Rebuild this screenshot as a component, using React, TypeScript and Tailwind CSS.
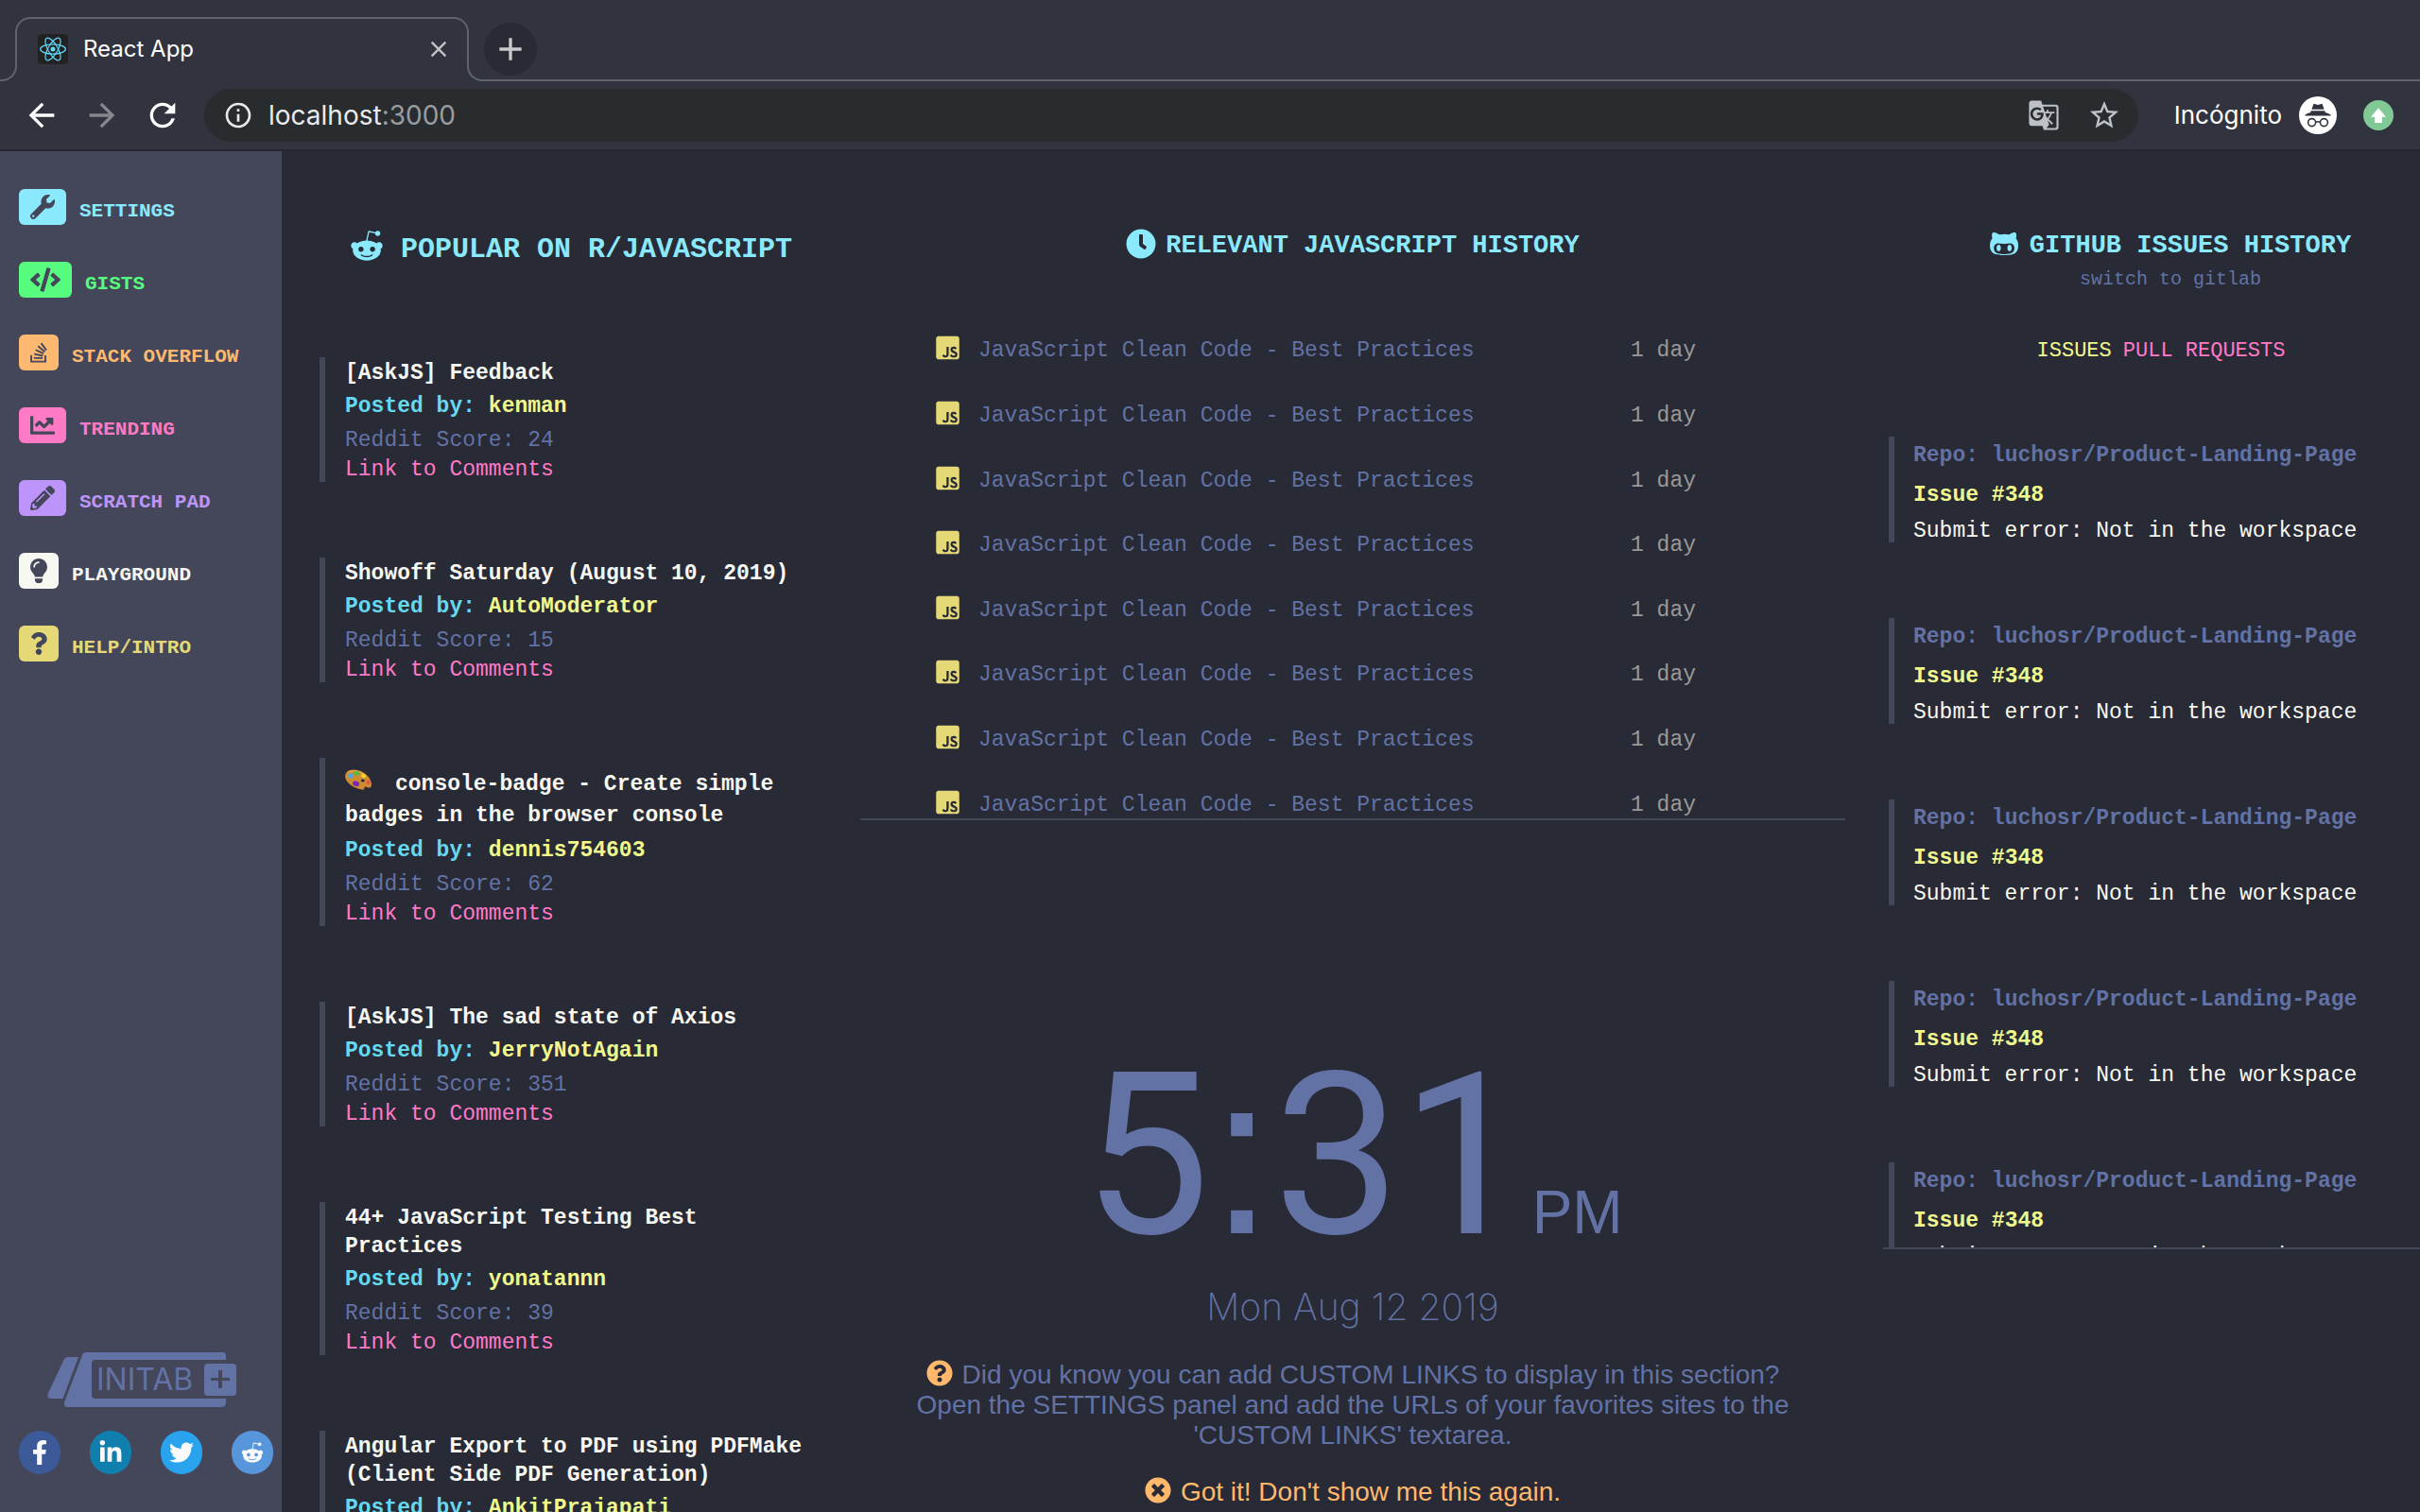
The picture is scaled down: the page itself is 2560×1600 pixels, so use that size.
import React from "react";
import type { IconType } from "react-icons";
import {
  FaChartLine,
  FaClock,
  FaCode,
  FaFacebookF,
  FaGithubAlt,
  FaJsSquare,
  FaLightbulb,
  FaLinkedinIn,
  FaPencilAlt,
  FaQuestion,
  FaQuestionCircle,
  FaRedditAlien,
  FaStackOverflow,
  FaTimesCircle,
  FaTwitter,
  FaWrench,
} from "react-icons/fa";
import {
  MdAdd,
  MdArrowBack,
  MdArrowForward,
  MdClose,
  MdGTranslate,
  MdInfoOutline,
  MdRefresh,
  MdStarBorder,
} from "react-icons/md";

type NavItem = { label: string; icon: IconType; iconWidth: string; bg: string; text: string };

const NAV: NavItem[] = [
  { label: "SETTINGS", icon: FaWrench, iconWidth: "w-[26px]", bg: "bg-[#8be9fd]", text: "text-[#8be9fd]" },
  { label: "GISTS", icon: FaCode, iconWidth: "w-[32px]", bg: "bg-[#57fb7d]", text: "text-[#57fb7d]" },
  { label: "STACK OVERFLOW", icon: FaStackOverflow, iconWidth: "w-[18px]", bg: "bg-[#ffb870]", text: "text-[#ffb870]" },
  { label: "TRENDING", icon: FaChartLine, iconWidth: "w-[26px]", bg: "bg-[#ff7ac4]", text: "text-[#ff7ac4]" },
  { label: "SCRATCH PAD", icon: FaPencilAlt, iconWidth: "w-[26px]", bg: "bg-[#bd94f9]", text: "text-[#bd94f9]" },
  { label: "PLAYGROUND", icon: FaLightbulb, iconWidth: "w-[18px]", bg: "bg-[#f8f8f2]", text: "text-[#f8f8f2]" },
  { label: "HELP/INTRO", icon: FaQuestion, iconWidth: "w-[18px]", bg: "bg-[#e5d977]", text: "text-[#e5d977]" },
];

const SOCIAL = [
  { label: "Facebook", icon: FaFacebookF, bg: "bg-[#3c5a98]", size: "size-[26px]" },
  { label: "LinkedIn", icon: FaLinkedinIn, bg: "bg-[#107fae]", size: "size-[26px]" },
  { label: "Twitter", icon: FaTwitter, bg: "bg-[#2aa3ef]", size: "size-[26px]" },
  { label: "Reddit", icon: FaRedditAlien, bg: "bg-[#5896dc]", size: "size-[24px]" },
];

type Post = { title: string; author: string; score: number; palette?: boolean };

const POSTS: Post[] = [
  { title: "[AskJS] Feedback", author: "kenman", score: 24 },
  { title: "Showoff Saturday (August 10, 2019)", author: "AutoModerator", score: 15 },
  {
    title: "console-badge - Create simple badges in the browser console",
    author: "dennis754603",
    score: 62,
    palette: true,
  },
  { title: "[AskJS] The sad state of Axios", author: "JerryNotAgain", score: 351 },
  { title: "44+ JavaScript Testing Best Practices", author: "yonatannn", score: 39 },
  { title: "Angular Export to PDF using PDFMake (Client Side PDF Generation)", author: "AnkitPrajapati", score: 27 },
];

const HISTORY = Array.from({ length: 8 }, () => ({
  title: "JavaScript Clean Code - Best Practices",
  age: "1 day",
}));

const ISSUES = Array.from({ length: 5 }, () => ({
  repo: "luchosr/Product-Landing-Page",
  number: 348,
  text: "Submit error: Not in the workspace",
}));

function ReactLogo() {
  return (
    <svg viewBox="0 0 32 32" className="size-8 shrink-0" aria-hidden="true">
      <rect width="32" height="32" rx="4" fill="#222" />
      <g fill="none" stroke="#61dafb" strokeWidth="1.2">
        <ellipse cx="16" cy="16" rx="13.4" ry="5.1" />
        <ellipse cx="16" cy="16" rx="13.4" ry="5.1" transform="rotate(60 16 16)" />
        <ellipse cx="16" cy="16" rx="13.4" ry="5.1" transform="rotate(120 16 16)" />
      </g>
      <circle cx="16" cy="16" r="2.5" fill="#61dafb" />
    </svg>
  );
}

function IncognitoBadge() {
  return (
    <svg viewBox="0 0 40 40" className="size-10 shrink-0" aria-hidden="true">
      <circle cx="20" cy="20" r="20" fill="#fff" />
      <path d="M15.2 8.4q.3-.8 1.2-.5l3.6 1 3.6-1q.9-.3 1.2.5l1.8 5.3H13.4z" fill="#31343f" />
      <path d="M12.8 15.2h14.4l.6 1.8q3.4.7 5.8 2.4v1H6.4v-1q2.4-1.7 5.8-2.4z" fill="#31343f" />
      <g fill="none" stroke="#31343f" strokeWidth="1.6">
        <circle cx="13.6" cy="27.6" r="4" />
        <circle cx="26.4" cy="27.6" r="4" />
        <path d="M17.6 27.3q2.4-1.2 4.8 0" />
      </g>
    </svg>
  );
}

function UpdateBadge() {
  return (
    <svg viewBox="0 0 32 32" className="size-8 shrink-0" aria-hidden="true">
      <circle cx="16" cy="16" r="16" fill="#81c995" />
      <path d="M16 8.3l8 9.4h-4.2V24h-7.6v-6.3H8z" fill="#fff" />
    </svg>
  );
}

function PaletteEmoji() {
  return (
    <svg viewBox="0 0 28 22" className="mr-[25px] inline-block h-[22px] w-7 align-baseline" role="img" aria-label="palette">
      <path
        d="M2 2.8C6-1 15 .2 21 4.6c5 3.7 7.6 9.2 6.8 12.8-.5 2.5-2.6 2.6-4.4 1.6-2-1-3.2-.6-3 .6.2 1.6-.8 2.4-2.6 2C9 20 2 15 .4 9.6-.3 6.8.4 4.2 2 2.8z"
        fill="#cf8c33"
      />
      <path d="M3 3.6C7 .4 15 1.6 20.4 5.4" fill="none" stroke="#e6ad55" strokeWidth="1.2" />
      <ellipse cx="6.2" cy="7" rx="3" ry="2.5" fill="#4aa9e8" />
      <ellipse cx="12.4" cy="4.2" rx="3" ry="2.1" fill="#4fbf3a" />
      <ellipse cx="19.6" cy="7" rx="2.7" ry="2" fill="#f3d62c" transform="rotate(30 19.6 7)" />
      <ellipse cx="24.4" cy="14" rx="1.7" ry="2.5" fill="#e8533f" />
      <ellipse cx="11.6" cy="15.2" rx="3.7" ry="2.7" fill="#7b28b8" transform="rotate(20 11.6 15.2)" />
      <ellipse cx="18.8" cy="12" rx="2" ry="1.6" fill="#282a36" />
    </svg>
  );
}

function InitabLogo() {
  return (
    <svg viewBox="0 0 200 60" className="h-[60px] w-[200px]" role="img" aria-label="INITAB+">
      <g fill="#6272a4">
        <path d="M22 6h11L16.5 50H4Q-.5 50 .6 45L17.5 9Q19 6 22 6z" />
        <path
          fillRule="evenodd"
          d="M41 1H185q4 0 4 4v4H51q-4 0-4 4v33q0 4 4 4H189v4q0 5-5 5H22q-5 0-4-5L37 4q1.2-3 4-3z"
        />
        <path fillRule="evenodd" d="M170 13h26q4 0 4 4v26q0 4-4 4h-26q-4 0-4-4V17q0-4 4-4zm11 7v8h-8v3h8v8h4v-8h8v-3h-8v-8z" />
        <text x="52" y="41" fontSize="32" fontFamily="Inter, sans-serif">
          INITAB
        </text>
      </g>
    </svg>
  );
}

function Browser() {
  return (
    <header className="h-40 shrink-0 border-b-2 border-[#25272f] bg-[#31343f] font-[Inter,sans-serif] text-white">
      <div className="flex h-[86px] items-end">
        <span className="-mr-0.5 h-8 w-[18px] rounded-br-2xl border-r-2 border-b-2 border-[#60636c]" />
        <div className="relative flex h-[68px] w-[480px] items-center pr-4 pl-6">
          <span className="pointer-events-none absolute inset-x-0 top-0 h-9 rounded-t-2xl border-2 border-b-0 border-[#60636c]" />
          <ReactLogo />
          <span className="ml-4 flex-1 text-[24px] leading-8">React App</span>
          <button type="button" aria-label="Close tab" className="text-[#c0c2c6]">
            <MdClose className="size-8 p-0.5" />
          </button>
        </div>
        <div className="-ml-0.5 flex h-[68px] flex-1 items-end">
          <span className="h-8 w-4 shrink-0 rounded-bl-2xl border-b-2 border-l-2 border-[#60636c]" />
          <div className="flex h-full flex-1 items-start border-b-2 border-[#60636c] pt-1.5 pl-0.5">
            <button
              type="button"
              aria-label="New tab"
              className="flex size-14 items-center justify-center rounded-full bg-[#282b33] text-[#c8cacd]"
            >
              <MdAdd className="size-10" />
            </button>
          </div>
        </div>
      </div>
      <div className="flex h-[72px] items-center pr-7 pl-6">
        <button type="button" aria-label="Back">
          <MdArrowBack className="size-10" />
        </button>
        <button type="button" aria-label="Forward" className="ml-6 text-[#85878e]">
          <MdArrowForward className="size-10" />
        </button>
        <button type="button" aria-label="Reload" className="ml-6">
          <MdRefresh className="size-10" />
        </button>
        <div className="ml-6 flex h-14 flex-1 items-center rounded-full bg-[#292c2e] pr-[18px] pl-5">
          <MdInfoOutline className="size-8 text-[#e8eaed]" />
          <div role="textbox" aria-label="Address" className="ml-4 flex-1 text-[28px] leading-8 text-[#e8eaed]">
            localhost<span className="text-[#9a9ca1]">:3000</span>
          </div>
          <button type="button" aria-label="Translate this page" className="text-[#bdc1c6]">
            <MdGTranslate className="size-[34px]" />
          </button>
          <button type="button" aria-label="Bookmark this page" className="ml-[29px] text-[#bdc1c6]">
            <MdStarBorder className="size-9" />
          </button>
        </div>
        <span className="ml-[38px] text-[26px] leading-8">Incógnito</span>
        <span className="ml-[18px]">
          <IncognitoBadge />
        </span>
        <button type="button" aria-label="Update" className="ml-7">
          <UpdateBadge />
        </button>
      </div>
    </header>
  );
}

function Sidebar() {
  return (
    <aside className="flex w-[298px] shrink-0 flex-col bg-[#44475a] pt-10 pb-10 pl-5">
      <nav className="flex flex-col gap-[39px]">
        {NAV.map(({ label, icon: Icon, iconWidth, bg, text }) => (
          <a key={label} href="#" className={`flex h-[38px] items-center ${text}`}>
            <span className={`flex h-[38px] items-center justify-center rounded-md px-3 text-[#44475a] ${bg}`}>
              <Icon className={`h-[26px] ${iconWidth}`} />
            </span>
            <span className="ml-3.5 pt-2.5 text-[21px] leading-8 font-bold">{label}</span>
          </a>
        ))}
      </nav>
      <a href="#" className="mt-auto ml-[30px] w-[200px]">
        <InitabLogo />
      </a>
      <div className="mt-6 flex gap-[31px]">
        {SOCIAL.map(({ label, icon: Icon, bg, size }) => (
          <a
            key={label}
            href="#"
            aria-label={label}
            className={`flex h-[46px] w-11 items-center justify-center rounded-full text-[#fafafa] ${bg}`}
          >
            <Icon className={size} />
          </a>
        ))}
      </div>
    </aside>
  );
}

function RedditColumn() {
  return (
    <section className="min-w-0">
      <h2 className="flex items-center gap-[18px] pt-20 pl-8 text-[30px] leading-8 font-bold text-[#8be9fd]">
        <FaRedditAlien className="size-9" />
        <span className="pt-2">POPULAR ON R/JAVASCRIPT</span>
      </h2>
      <ul className="mt-[98px] flex flex-col gap-20">
        {POSTS.map((post) => (
          <li key={post.title} className="max-w-[532px] border-l-[6px] border-[#44475a] pl-[21px] text-[23px]">
            <h3
              className={
                post.palette
                  ? "pt-3 leading-[33px] font-bold text-[#f8f8f2]"
                  : "pt-0.5 leading-[30px] font-bold text-[#f8f8f2]"
              }
            >
              {post.palette && <PaletteEmoji />}
              <a href="#">{post.title}</a>
            </h3>
            <p className="pt-0.5 leading-9 font-bold text-[#66d9ef]">
              Posted by: <span className="text-[#f1fa8c]">{post.author}</span>
            </p>
            <p className="leading-9 text-[#6272a4]">Reddit Score: {post.score}</p>
            <a href="#" className="block leading-[26px] text-[#ff79c6]">
              Link to Comments
            </a>
          </li>
        ))}
      </ul>
    </section>
  );
}

function CenterColumn() {
  return (
    <section className="min-w-0">
      <h2 className="flex items-center justify-center gap-2.5 pt-20 text-[27px] leading-8 font-bold text-[#8be9fd]">
        <FaClock className="size-8" />
        <span className="pt-1">RELEVANT JAVASCRIPT HISTORY</span>
      </h2>
      <div className="mt-14 h-[536px] overflow-hidden border-b-2 border-[#44475a] pt-0.5">
        <ul className="grid h-[549px] auto-rows-fr pl-20">
          {HISTORY.map((entry, i) => (
            <li key={i} className="flex items-center text-[23px] leading-8">
              <FaJsSquare className="h-7 w-[25px] text-[#e5d977]" />
              <a href="#" className="ml-5 w-[690px] pt-1.5 text-[#6272a4]">
                {entry.title}
              </a>
              <span className="pt-1.5 text-[#999999]">{entry.age}</span>
            </li>
          ))}
        </ul>
      </div>
      <div className="pt-[234px] text-center font-['Liberation_Sans',Arial,sans-serif] text-[#6272a4]">
        <time className="block font-[Roboto,sans-serif] text-[240px] leading-none whitespace-nowrap">
          5<span className="font-['Liberation_Sans',Arial,sans-serif]">:</span>31
          <span className="ml-1 font-['Liberation_Sans',Arial,sans-serif] text-[64px]">PM</span>
        </time>
        <p className="mt-4 font-[Inter,sans-serif] text-[39px] leading-12 font-extralight">Mon Aug 12 2019</p>
        <p className="mx-auto mt-8 max-w-[960px] text-[28px] leading-8">
          <FaQuestionCircle className="mr-2.5 inline-block size-7 align-[-3px] text-[#ffb86c]" />
          Did you know you can add CUSTOM LINKS to display in this section? Open the SETTINGS panel and add the URLs of
          your favorites sites to the 'CUSTOM LINKS' textarea.
        </p>
        <button type="button" className="mt-7 text-[28px] leading-8 text-[#ffb86c]">
          <FaTimesCircle className="mr-2.5 inline-block size-7 align-[-3px]" />
          Got it! Don't show me this again.
        </button>
      </div>
    </section>
  );
}

function GithubColumn() {
  return (
    <section className="min-w-0">
      <div className="pt-20 pl-10 text-center">
        <h2 className="flex items-center justify-center gap-3 text-[27px] leading-8 font-bold text-[#8be9fd]">
          <FaGithubAlt className="h-8 w-[30px]" />
          <span className="pt-1">GITHUB ISSUES HISTORY</span>
        </h2>
        <button type="button" className="mt-1 block w-full text-[20px] leading-8 text-[#6272a4]">
          switch to gitlab
        </button>
      </div>
      <div className="mt-11 flex justify-center gap-3 pl-5 text-[22px] leading-8">
        <button type="button" className="text-[#f1fa8c]">
          ISSUES
        </button>
        <button type="button" className="text-[#ff79c6]">
          PULL REQUESTS
        </button>
      </div>
      <div className="mt-[38px] h-[896px] overflow-hidden border-b-2 border-[#44475a] pt-9 pl-1.5">
        <ul className="flex flex-col gap-20">
          {ISSUES.map((issue, i) => (
            <li key={i} className="h-28 border-l-[6px] border-[#44475a] pt-0.5 pl-5 text-[23px] whitespace-nowrap">
              <h3 className="pb-2 leading-9 font-bold text-[#6272a4]">Repo: {issue.repo}</h3>
              <p className="leading-8 font-bold text-[#f1fa8c]">Issue #{issue.number}</p>
              <p className="pt-1 leading-9 text-[#f8f8f2]">{issue.text}</p>
            </li>
          ))}
        </ul>
      </div>
    </section>
  );
}

export default function App() {
  return (
    <div className="flex h-screen flex-col overflow-hidden bg-[#282a36] font-['Liberation_Mono','Courier_New',monospace]">
      <Browser />
      <div className="flex min-h-0 flex-1">
        <Sidebar />
        <main className="grid min-w-0 flex-1 grid-cols-[532fr_1042fr_568fr] gap-10 overflow-hidden pl-10">
          <RedditColumn />
          <CenterColumn />
          <GithubColumn />
        </main>
      </div>
    </div>
  );
}
